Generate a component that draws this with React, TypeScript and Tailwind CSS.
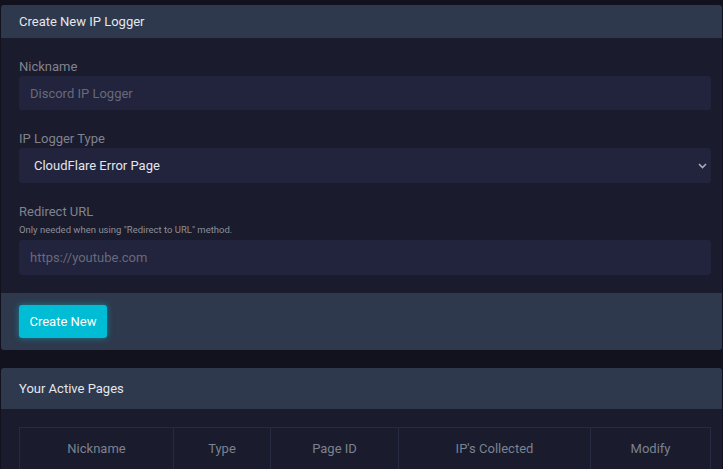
const COLUMNS = [
  { label: 'Nickname', width: 'w-[154px]' },
  { label: 'Type', width: 'w-[97px]' },
  { label: 'Page ID', width: 'w-[128px]' },
  { label: "IP's Collected", width: 'w-[192px]' },
  { label: 'Modify', width: 'flex-1' },
]

function Label({ children }: { children: React.ReactNode }) {
  return <div className="text-[13px] leading-[18px] text-[#80838f]">{children}</div>
}

function Field({ placeholder, h }: { placeholder: string; h: string }) {
  return (
    <input
      placeholder={placeholder}
      className={`w-full ${h} rounded-[3px] bg-[#22233c] px-[11px] text-[13px] text-[#e4e6eb] placeholder:text-[#676a7b] outline-none`}
    />
  )
}

export default function App() {
  return (
    <div
      className="min-h-screen bg-[#11121e] pt-[5px] px-px"
      style={{ fontFamily: 'Roboto, "Liberation Sans", sans-serif' }}
    >
      {/* Create card */}
      <div className="rounded-[3px] overflow-hidden">
        <div className="h-[33px] flex items-center px-[18px] bg-[#2e394d] text-[13px] text-[#e4e7ec]">
          Create New IP Logger
        </div>
        <div className="bg-[#1a1b2d] pl-[18px] pr-[11px] pt-[20px] pb-[18px]">
          <Label>Nickname</Label>
          <Field placeholder="Discord IP Logger" h="h-[34px]" />

          <div className="mt-[20px]">
            <Label>IP Logger Type</Label>
          </div>
          <div className="relative h-[35px] rounded-[3px] bg-[#22233c] flex items-center pl-[15px] text-[13px] text-[#e4e6eb]">
            CloudFlare Error Page
            <svg
              className="absolute right-[4px] top-[15px]"
              width="9"
              height="6"
              viewBox="0 0 9 6"
              fill="none"
              stroke="#a9abb6"
              strokeWidth="1.6"
            >
              <path d="M1 1l3.5 3.5L8 1" />
            </svg>
          </div>

          <div className="mt-[20px]">
            <Label>Redirect URL</Label>
          </div>
          <div className="text-[9.5px] leading-[14px] mt-[2px] mb-[3px] text-[#8c8f9b]">
            Only needed when using "Redirect to URL" method.
          </div>
          <Field placeholder="https://youtube.com" h="h-[35px]" />
        </div>
        <div className="h-[57px] bg-[#2e394d] px-[18px] pt-[12px]">
          <button className="h-[33px] w-[88px] rounded-[3px] bg-[#00bcd4] text-[13px] text-white shadow-[0_0_6px_rgba(0,188,212,0.55)]">
            Create New
          </button>
        </div>
      </div>

      {/* Active pages card */}
      <div className="mt-[18px] rounded-[3px] overflow-hidden">
        <div className="h-[41px] flex items-center px-[18px] bg-[#2e394d] text-[13px] text-[#e4e7ec]">
          Your Active Pages
        </div>
        <div className="bg-[#1a1b2d] pl-[18px] pr-[11px] pt-[18px] pb-[18px]">
          <div className="border border-[#262a42]">
            <div className="flex h-[42px]">
              {COLUMNS.map((col, i) => (
                <div
                  key={col.label}
                  className={`${col.width} flex items-center justify-center text-[13px] text-[#7b8290] ${
                    i < COLUMNS.length - 1 ? 'border-r border-[#262a42]' : ''
                  }`}
                >
                  {col.label}
                </div>
              ))}
            </div>
            <div className="flex h-[42px] border-t border-[#262a42]">
              {COLUMNS.map((col, i) => (
                <div
                  key={col.label}
                  className={`${col.width} ${i < COLUMNS.length - 1 ? 'border-r border-[#262a42]' : ''}`}
                />
              ))}
            </div>
          </div>
        </div>
      </div>
    </div>
  )
}
